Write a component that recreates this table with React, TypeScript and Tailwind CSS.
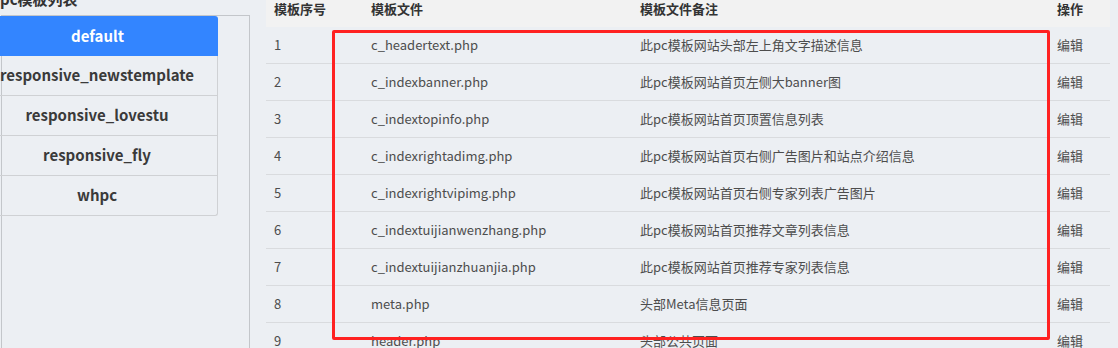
import React from "react";

const rows: [string, string][] = [
  ["c_headertext.php", "此pc模板网站头部左上角文字描述信息"],
  ["c_indexbanner.php", "此pc模板网站首页左侧大banner图"],
  ["c_indextopinfo.php", "此pc模板网站首页顶置信息列表"],
  ["c_indexrightadimg.php", "此pc模板网站首页右侧广告图片和站点介绍信息"],
  ["c_indexrightvipimg.php", "此pc模板网站首页右侧专家列表广告图片"],
  ["c_indextuijianwenzhang.php", "此pc模板网站首页推荐文章列表信息"],
  ["c_indextuijianzhuanjia.php", "此pc模板网站首页推荐专家列表信息"],
  ["meta.php", "头部Meta信息页面"],
  ["header.php", "头部公共页面"],
];

const templates = ["responsive_newstemplate", "responsive_lovestu", "responsive_fly", "whpc"];

export default function App() {
  return (
    <div
      className="relative w-[1118px] h-[348px] overflow-hidden bg-[#eceff3] flex"
      style={{ fontFamily: '"Noto Sans CJK SC", "Noto Sans", sans-serif' }}
    >
      {/* left column */}
      <div className="w-[250px] shrink-0 flex flex-col">
        <div className="h-[15px] shrink-0 relative">
          <div className="absolute left-0 top-[-11px] text-[15px] leading-[20px] font-bold text-[#333] whitespace-nowrap">
            pc模板列表
          </div>
        </div>
        <div className="ml-[1px] w-[249px] flex-1 border-t border-l border-r border-[#c3c6ca]">
          <div className="w-[241px] -ml-[25px]">
            <div className="h-[40px] flex items-center justify-center bg-[#3385ff] text-white text-[15px] font-bold rounded-tr-[3px]">
              default
            </div>
            {templates.map((t, i) => (
              <div
                key={t}
                className={`h-[40px] flex items-center justify-center border-r border-b border-[#cfd1d4] text-[15px] font-bold text-[#3a3a3a] ${
                  i === templates.length - 1 ? "rounded-br-[3px]" : ""
                }`}
              >
                {t}
              </div>
            ))}
          </div>
        </div>
      </div>

      {/* table */}
      <div className="ml-[16px] w-[844px] shrink-0 flex flex-col text-[13px]">
        <div className="h-[27px] shrink-0 bg-[#f2f2f2] flex font-bold text-[#333] leading-[17px]">
          <div className="w-[105px] pl-[8px]">模板序号</div>
          <div className="w-[269px]">模板文件</div>
          <div className="w-[417px]">模板文件备注</div>
          <div>操作</div>
        </div>
        {rows.map(([f, d], i) => (
          <div key={f} className="h-[37px] shrink-0 flex items-center border-b border-[#d9dbde] text-[#4d4d4d]">
            <div className="w-[105px] pl-[8px]">{i + 1}</div>
            <div className="w-[269px]">{f}</div>
            <div className="w-[417px]">{d}</div>
            <div>编辑</div>
          </div>
        ))}
      </div>

      {/* red highlight */}
      <div className="absolute left-[332px] top-[30px] w-[718px] h-[310px] border-[3px] border-[#ff2121] rounded-[2px] pointer-events-none" />
    </div>
  );
}
